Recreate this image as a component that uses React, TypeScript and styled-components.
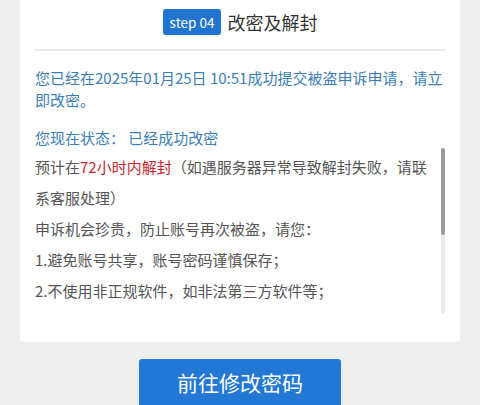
import styled, { createGlobalStyle } from 'styled-components'

const GlobalStyle = createGlobalStyle`
  html, body {
    margin: 0;
    padding: 0;
    background: #eeeeee;
    font-family: "Noto Sans CJK SC", "Noto Sans", sans-serif;
  }
`

const Page = styled.div`
  display: flex;
  flex-direction: column;
  align-items: center;
  width: 480px;
  height: 405px;
  overflow: hidden;
`

const Card = styled.section`
  width: 440px;
  box-sizing: border-box;
  background: #fff;
  border-radius: 0 0 3px 3px;
  padding: 9px 15px 28px;
`

const Header = styled.div`
  display: flex;
  justify-content: center;
  align-items: center;
  gap: 6px;
  padding-bottom: 14px;
  border-bottom: 2px solid #e8e8e8;
`

const StepBadge = styled.span`
  display: inline-flex;
  align-items: center;
  height: 26px;
  padding: 0 7px;
  border-radius: 3px;
  background: #1f74d0;
  color: #fff;
  font-size: 13.5px;
`

const Title = styled.h2`
  margin: 0;
  font-size: 18px;
  font-weight: 400;
  color: #333;
  line-height: 26px;
`

const Notice = styled.p`
  margin: 16px 0 0;
  font-size: 15px;
  line-height: 22px;
  color: #3b7db7;
`

// scrollable text area; the scrollbar is drawn since the headless browser hides it
const ScrollBox = styled.div`
  position: relative;
  margin-top: -1px;
  height: 166px;
  overflow: hidden;
  padding-top: 3px;
  box-sizing: border-box;
`

const ScrollTrack = styled.div`
  position: absolute;
  top: 0;
  right: 0;
  bottom: 0;
  width: 4px;
  background: #ebebeb;
  border-radius: 2px;
`

const ScrollThumb = styled.div`
  height: 87px;
  background: #9a9a9a;
  border-radius: 2px;
`

const Line = styled.p`
  margin: 0;
  padding-right: 10px;
  font-size: 15px;
  line-height: 31px;
  color: #555;
`

const Red = styled.span`
  color: #c4262d;
`

const PrimaryButton = styled.button`
  margin-top: 17px;
  width: 202px;
  height: 50px;
  flex-shrink: 0;
  border: none;
  border-radius: 3px;
  background: #2377d5;
  color: #fff;
  font-family: inherit;
  font-size: 21px;
  line-height: 46px;
  padding: 0 0 4px;
  cursor: pointer;
`

const tips = [
  '申诉机会珍贵，防止账号再次被盗，请您：',
  '1.避免账号共享，账号密码谨慎保存；',
  '2.不使用非正规软件，如非法第三方软件等；',
]

export default function App() {
  return (
    <>
      <GlobalStyle />
      <Page>
        <Card>
          <Header>
            <StepBadge>step 04</StepBadge>
            <Title>改密及解封</Title>
          </Header>
          <Notice>
            您已经在2025年01月25日 10:51成功提交被盗申诉申请，请立即改密。
          </Notice>
          <Notice>您现在状态：&nbsp;已经成功改密</Notice>
          <ScrollBox>
            <Line>
              预计在<Red>72小时内解封</Red>（如遇服务器异常导致解封失败，请联系客服处理）
            </Line>
            {tips.map((t, i) => (
              <Line key={i}>{t}</Line>
            ))}
            <ScrollTrack>
              <ScrollThumb />
            </ScrollTrack>
          </ScrollBox>
        </Card>
        <PrimaryButton>前往修改密码</PrimaryButton>
      </Page>
    </>
  )
}
